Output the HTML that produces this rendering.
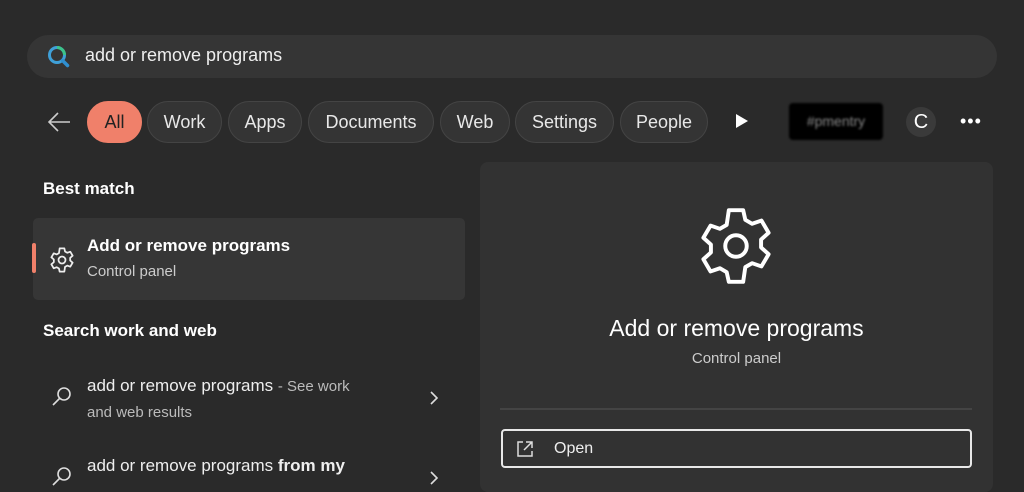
<!DOCTYPE html>
<html><head><meta charset="utf-8"><style>
*{margin:0;padding:0;box-sizing:border-box}
body{width:1024px;height:487px;background:#2a2a2a;font-family:"Liberation Sans",sans-serif;color:#fff;position:relative;overflow:hidden}
.a{position:absolute}
.search{left:27px;top:35px;width:970px;height:43px;background:#353535;border-radius:22px}
.pill{position:absolute;top:101px;height:42px;border-radius:21px;background:#343434;border:1px solid #444;font-size:18px;line-height:40px;text-align:center;color:#e8e8e8}
.panel{left:480px;top:162px;width:513px;height:330px;background:#323232;border-radius:8px}
</style></head><body>
<div class="a search"></div>
<svg class="a" style="left:46px;top:44px" width="26" height="26" viewBox="0 0 26 26"><circle cx="11" cy="11" r="7.5" fill="none" stroke="#3fa0d8" stroke-width="3"/><path d="M11 3.5a7.5 7.5 0 0 1 7.5 7.5" fill="none" stroke="#3cc48a" stroke-width="3"/><path d="M16.5 16.5l5 5" stroke="#2f8fd0" stroke-width="3.5" stroke-linecap="round"/></svg>
<div class="a" style="left:85px;top:45px;font-size:18px;color:#eee">add or remove programs</div>
<svg class="a" style="left:46px;top:110px" width="26" height="24"><path d="M24 12H3M12 3l-9 9 9 9" fill="none" stroke="#ccc" stroke-width="1.6"/></svg>
<div class="pill" style="left:87px;width:55px;background:#f0806a;border-color:#f0806a;color:#222">All</div>
<div class="pill" style="left:147px;width:75px">Work</div>
<div class="pill" style="left:228px;width:74px">Apps</div>
<div class="pill" style="left:308px;width:126px">Documents</div>
<div class="pill" style="left:440px;width:70px">Web</div>
<div class="pill" style="left:515px;width:99px">Settings</div>
<div class="pill" style="left:620px;width:88px">People</div>
<svg class="a" style="left:734px;top:112px" width="16" height="18"><path d="M2 2l12 7-12 7z" fill="#fff"/></svg>
<div class="a" style="left:789px;top:103px;width:94px;height:37px;background:#000;border-radius:4px;color:#888;font-size:14px;line-height:37px;text-align:center;filter:blur(1px)">#pmentry</div>
<div class="a" style="left:906px;top:107px;width:30px;height:30px;border-radius:15px;background:#3a3a3a;font-size:20px;line-height:30px;text-align:center">C</div>
<div class="a" style="left:960px;top:111px;font-size:18px;letter-spacing:1px">•••</div>
<div class="a" style="left:43px;top:179px;font-size:17px;font-weight:bold">Best match</div>
<div class="a" style="left:33px;top:218px;width:432px;height:82px;background:#363636;border-radius:5px"></div>
<div class="a" style="left:32px;top:243px;width:4px;height:30px;background:#f0806a;border-radius:2px"></div>
<svg class="a" style="left:48px;top:246px" width="28" height="28" viewBox="0 0 24 24"><path d="M10 2h4l.6 2.7 1.9 1.1 2.6-.9 2 3.4-2.1 1.9v2.2l2.1 1.9-2 3.4-2.6-.9-1.9 1.1L14 22h-4l-.6-2.7-1.9-1.1-2.6.9-2-3.4L5 13.8v-2.2L2.9 9.7l2-3.4 2.6.9 1.9-1.1z" fill="none" stroke="#eee" stroke-width="1.5" stroke-linejoin="round"/><circle cx="12" cy="12" r="3" fill="none" stroke="#eee" stroke-width="1.5"/></svg>
<div class="a" style="left:87px;top:236px;font-size:17px;font-weight:bold">Add or remove programs</div>
<div class="a" style="left:87px;top:263px;font-size:15px;color:#ccc">Control panel</div>
<div class="a" style="left:43px;top:321px;font-size:17px;font-weight:bold">Search work and web</div>
<svg class="a" style="left:50px;top:385px" width="24" height="24"><circle cx="14" cy="9" r="6" fill="none" stroke="#ddd" stroke-width="1.6"/><path d="M10 13l-7 7" stroke="#ddd" stroke-width="1.6"/></svg>
<div class="a" style="left:87px;top:376px;font-size:17px;color:#eee">add or remove programs <span style="font-size:15px;color:#bbb">- See work</span></div>
<div class="a" style="left:87px;top:404px;font-size:15px;color:#bbb">and web results</div>
<svg class="a" style="left:428px;top:390px" width="12" height="16"><path d="M3 2l6 6-6 6" fill="none" stroke="#ddd" stroke-width="1.6"/></svg>
<svg class="a" style="left:50px;top:465px" width="24" height="24"><circle cx="14" cy="9" r="6" fill="none" stroke="#ddd" stroke-width="1.6"/><path d="M10 13l-7 7" stroke="#ddd" stroke-width="1.6"/></svg>
<div class="a" style="left:87px;top:456px;font-size:17px;color:#eee">add or remove programs <b>from my</b></div>
<svg class="a" style="left:428px;top:470px" width="12" height="16"><path d="M3 2l6 6-6 6" fill="none" stroke="#ddd" stroke-width="1.6"/></svg>
<div class="a panel"></div>
<svg class="a" style="left:693px;top:203px" width="86" height="86" viewBox="0 0 24 24"><path d="M10 2h4l.6 2.7 1.9 1.1 2.6-.9 2 3.4-2.1 1.9v2.2l2.1 1.9-2 3.4-2.6-.9-1.9 1.1L14 22h-4l-.6-2.7-1.9-1.1-2.6.9-2-3.4L5 13.8v-2.2L2.9 9.7l2-3.4 2.6.9 1.9-1.1z" fill="none" stroke="#fff" stroke-width="1.1" stroke-linejoin="round"/><circle cx="12" cy="12" r="3" fill="none" stroke="#fff" stroke-width="1.1"/></svg>
<div class="a" style="left:480px;top:315px;width:513px;text-align:center;font-size:23px">Add or remove programs</div>
<div class="a" style="left:480px;top:350px;width:513px;text-align:center;font-size:15px;color:#ccc">Control panel</div>
<div class="a" style="left:500px;top:408px;width:472px;height:2px;background:#444"></div>
<div class="a" style="left:501px;top:429px;width:471px;height:39px;border:2px solid #e8e8e8;border-radius:4px"></div>
<svg class="a" style="left:515px;top:439px" width="20" height="20"><path d="M8 3H3v14h14v-5M11 3h6v6M17 3l-8 8" fill="none" stroke="#ddd" stroke-width="1.5"/></svg>
<div class="a" style="left:554px;top:440px;font-size:16px;color:#eee">Open</div>
</body></html>
